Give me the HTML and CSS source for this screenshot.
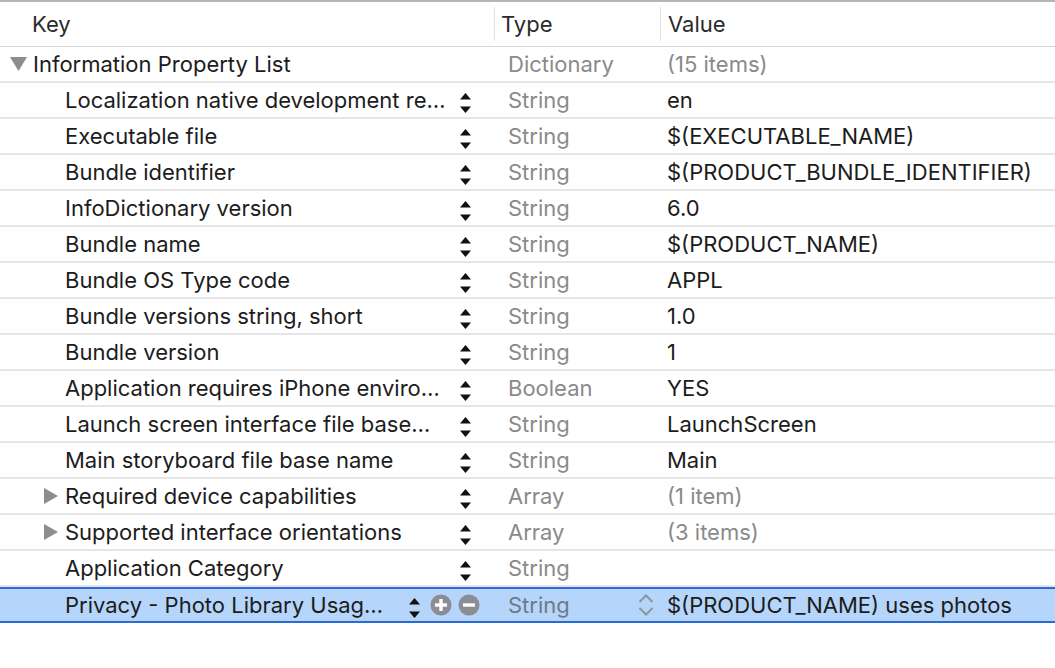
FILE: index.html
```html
<!DOCTYPE html>
<html>
<head>
<meta charset="utf-8">
<link rel="stylesheet" href="styles.css">
</head>
<body>
<div class="table">
  <div class="header">
    <div class="hcell hkey">Key</div>
    <div class="hcell htype">Type</div>
    <div class="hcell hvalue">Value</div>
  </div>

  <div class="row">
    <div class="key root">
      <svg class="disc" width="17" height="16" viewBox="0 0 17 16"><polygon points="0,1 17,1 8.5,15" fill="#8d8d8d"/></svg>
      <span class="ktext">Information Property List</span>
    </div>
    <div class="type">Dictionary</div>
    <div class="value dim">(15 items)</div>
  </div>

  <div class="row">
    <div class="key"><span class="ktext">Localization native development re…</span><svg class="step" width="11" height="20" viewBox="0 0 11 20"><polygon points="5.5,0 11,6.5 0,6.5" fill="#111"/><polygon points="0,13.5 11,13.5 5.5,20" fill="#111"/></svg></div>
    <div class="type">String</div>
    <div class="value">en</div>
  </div>

  <div class="row">
    <div class="key"><span class="ktext">Executable file</span><svg class="step" width="11" height="20" viewBox="0 0 11 20"><polygon points="5.5,0 11,6.5 0,6.5" fill="#111"/><polygon points="0,13.5 11,13.5 5.5,20" fill="#111"/></svg></div>
    <div class="type">String</div>
    <div class="value">$(EXECUTABLE_NAME)</div>
  </div>

  <div class="row">
    <div class="key"><span class="ktext">Bundle identifier</span><svg class="step" width="11" height="20" viewBox="0 0 11 20"><polygon points="5.5,0 11,6.5 0,6.5" fill="#111"/><polygon points="0,13.5 11,13.5 5.5,20" fill="#111"/></svg></div>
    <div class="type">String</div>
    <div class="value">$(PRODUCT_BUNDLE_IDENTIFIER)</div>
  </div>

  <div class="row">
    <div class="key"><span class="ktext">InfoDictionary version</span><svg class="step" width="11" height="20" viewBox="0 0 11 20"><polygon points="5.5,0 11,6.5 0,6.5" fill="#111"/><polygon points="0,13.5 11,13.5 5.5,20" fill="#111"/></svg></div>
    <div class="type">String</div>
    <div class="value">6.0</div>
  </div>

  <div class="row">
    <div class="key"><span class="ktext">Bundle name</span><svg class="step" width="11" height="20" viewBox="0 0 11 20"><polygon points="5.5,0 11,6.5 0,6.5" fill="#111"/><polygon points="0,13.5 11,13.5 5.5,20" fill="#111"/></svg></div>
    <div class="type">String</div>
    <div class="value">$(PRODUCT_NAME)</div>
  </div>

  <div class="row">
    <div class="key"><span class="ktext">Bundle OS Type code</span><svg class="step" width="11" height="20" viewBox="0 0 11 20"><polygon points="5.5,0 11,6.5 0,6.5" fill="#111"/><polygon points="0,13.5 11,13.5 5.5,20" fill="#111"/></svg></div>
    <div class="type">String</div>
    <div class="value">APPL</div>
  </div>

  <div class="row">
    <div class="key"><span class="ktext">Bundle versions string, short</span><svg class="step" width="11" height="20" viewBox="0 0 11 20"><polygon points="5.5,0 11,6.5 0,6.5" fill="#111"/><polygon points="0,13.5 11,13.5 5.5,20" fill="#111"/></svg></div>
    <div class="type">String</div>
    <div class="value">1.0</div>
  </div>

  <div class="row">
    <div class="key"><span class="ktext">Bundle version</span><svg class="step" width="11" height="20" viewBox="0 0 11 20"><polygon points="5.5,0 11,6.5 0,6.5" fill="#111"/><polygon points="0,13.5 11,13.5 5.5,20" fill="#111"/></svg></div>
    <div class="type">String</div>
    <div class="value">1</div>
  </div>

  <div class="row">
    <div class="key"><span class="ktext">Application requires iPhone enviro…</span><svg class="step" width="11" height="20" viewBox="0 0 11 20"><polygon points="5.5,0 11,6.5 0,6.5" fill="#111"/><polygon points="0,13.5 11,13.5 5.5,20" fill="#111"/></svg></div>
    <div class="type">Boolean</div>
    <div class="value">YES</div>
  </div>

  <div class="row">
    <div class="key"><span class="ktext">Launch screen interface file base…</span><svg class="step" width="11" height="20" viewBox="0 0 11 20"><polygon points="5.5,0 11,6.5 0,6.5" fill="#111"/><polygon points="0,13.5 11,13.5 5.5,20" fill="#111"/></svg></div>
    <div class="type">String</div>
    <div class="value">LaunchScreen</div>
  </div>

  <div class="row">
    <div class="key"><span class="ktext">Main storyboard file base name</span><svg class="step" width="11" height="20" viewBox="0 0 11 20"><polygon points="5.5,0 11,6.5 0,6.5" fill="#111"/><polygon points="0,13.5 11,13.5 5.5,20" fill="#111"/></svg></div>
    <div class="type">String</div>
    <div class="value">Main</div>
  </div>

  <div class="row">
    <div class="key child-disc"><svg class="disc" width="14" height="16" viewBox="0 0 14 16"><polygon points="0,0 14,8 0,16" fill="#8d8d8d"/></svg><span class="ktext">Required device capabilities</span><svg class="step" width="11" height="20" viewBox="0 0 11 20"><polygon points="5.5,0 11,6.5 0,6.5" fill="#111"/><polygon points="0,13.5 11,13.5 5.5,20" fill="#111"/></svg></div>
    <div class="type">Array</div>
    <div class="value dim">(1 item)</div>
  </div>

  <div class="row">
    <div class="key child-disc"><svg class="disc" width="14" height="16" viewBox="0 0 14 16"><polygon points="0,0 14,8 0,16" fill="#8d8d8d"/></svg><span class="ktext">Supported interface orientations</span><svg class="step" width="11" height="20" viewBox="0 0 11 20"><polygon points="5.5,0 11,6.5 0,6.5" fill="#111"/><polygon points="0,13.5 11,13.5 5.5,20" fill="#111"/></svg></div>
    <div class="type">Array</div>
    <div class="value dim">(3 items)</div>
  </div>

  <div class="row">
    <div class="key"><span class="ktext">Application Category</span><svg class="step" width="11" height="20" viewBox="0 0 11 20"><polygon points="5.5,0 11,6.5 0,6.5" fill="#111"/><polygon points="0,13.5 11,13.5 5.5,20" fill="#111"/></svg></div>
    <div class="type">String</div>
    <div class="value"></div>
  </div>

  <div class="row selected">
    <div class="key"><span class="ktext">Privacy - Photo Library Usag…</span>
      <span class="ctrls">
        <svg class="step" width="11" height="20" viewBox="0 0 11 20"><polygon points="5.5,0 11,6.5 0,6.5" fill="#111"/><polygon points="0,13.5 11,13.5 5.5,20" fill="#111"/></svg>
        <svg class="btn" width="22" height="22" viewBox="0 0 22 22"><circle cx="11" cy="11" r="10.5" fill="#8a8e94"/><rect x="5" y="9.3" width="12" height="3.4" fill="#fff"/><rect x="9.3" y="5" width="3.4" height="12" fill="#fff"/></svg>
        <svg class="btn" width="22" height="22" viewBox="0 0 22 22"><circle cx="11" cy="11" r="10.5" fill="#8a8e94"/><rect x="5" y="9.3" width="12" height="3.4" fill="#fff"/></svg>
      </span>
    </div>
    <div class="type selpop"><span>String</span><svg class="chev" width="16" height="24" viewBox="0 0 16 24"><polyline points="1.5,9 8,2.5 14.5,9" fill="none" stroke="#8b95a2" stroke-width="2"/><polyline points="1.5,15 8,21.5 14.5,15" fill="none" stroke="#8b95a2" stroke-width="2"/></svg></div>
    <div class="value">$(PRODUCT_NAME) uses photos</div>
  </div>
</div>
</body>
</html>
```

FILE: styles.css
```css
* { box-sizing: border-box; }
html, body {
  margin: 0;
  padding: 0;
  background: #fff;
}
body {
  font-family: Inter, "Liberation Sans", sans-serif;
  font-size: 22px;
  color: #1c1c1c;
  width: 1055px;
  height: 668px;
  overflow: hidden;
}
.table {
  display: flex;
  flex-direction: column;
}
.header {
  display: grid;
  grid-template-columns: 494px 166px 1fr;
  height: 47px;
  border-top: 2px solid #b6b6b6;
  border-bottom: 1px solid #d6d6d6;
  align-items: center;
}
.hcell {
  color: #2b2b2b;
  height: 34px;
  display: flex;
  align-items: center;
  padding-bottom: 1px;
}
.hkey { padding-left: 32px; }
.htype { padding-left: 6px; border-left: 1px solid #e2e2e2; }
.hvalue { padding-left: 7px; border-left: 1px solid #e2e2e2; }

.row {
  display: grid;
  grid-template-columns: 494px 166px 1fr;
  height: 36px;
  border-bottom: 2px solid #e6e6e6;
  align-items: center;
}
.key {
  display: flex;
  align-items: center;
  padding-left: 65px;
  padding-right: 23px;
  height: 100%;
  white-space: nowrap;
}
.key.root { padding-left: 10px; }
.key.root .disc { margin-right: 6px; }
.key.child-disc { padding-left: 44px; }
.key.child-disc .disc { margin-right: 7px; }
.ktext { flex: 1; overflow: hidden; }
.step { flex: none; margin-top: 6px; }
.type {
  color: #8a8a8a;
  padding-left: 14px;
  white-space: nowrap;
}
.value {
  padding-left: 7px;
  white-space: nowrap;
}
.value.dim { color: #8a8a8a; }

.selected {
  background: #b5d5fa;
  border-top: 2px solid #2b6ad3;
  border-bottom: 2px solid #2b6ad3;
  height: 36px;
}
.selected .key { padding-right: 0; }
.ctrls {
  display: flex;
  align-items: center;
  gap: 0;
  margin-right: 14px;
}
.ctrls .step { margin-right: 10px; }
.ctrls .btn + .btn { margin-left: 6px; }
.selected .type { color: #6e7a88; }
.selpop {
  display: flex;
  align-items: center;
  justify-content: space-between;
  padding-right: 6px;
}
.chev { flex: none; }
```
